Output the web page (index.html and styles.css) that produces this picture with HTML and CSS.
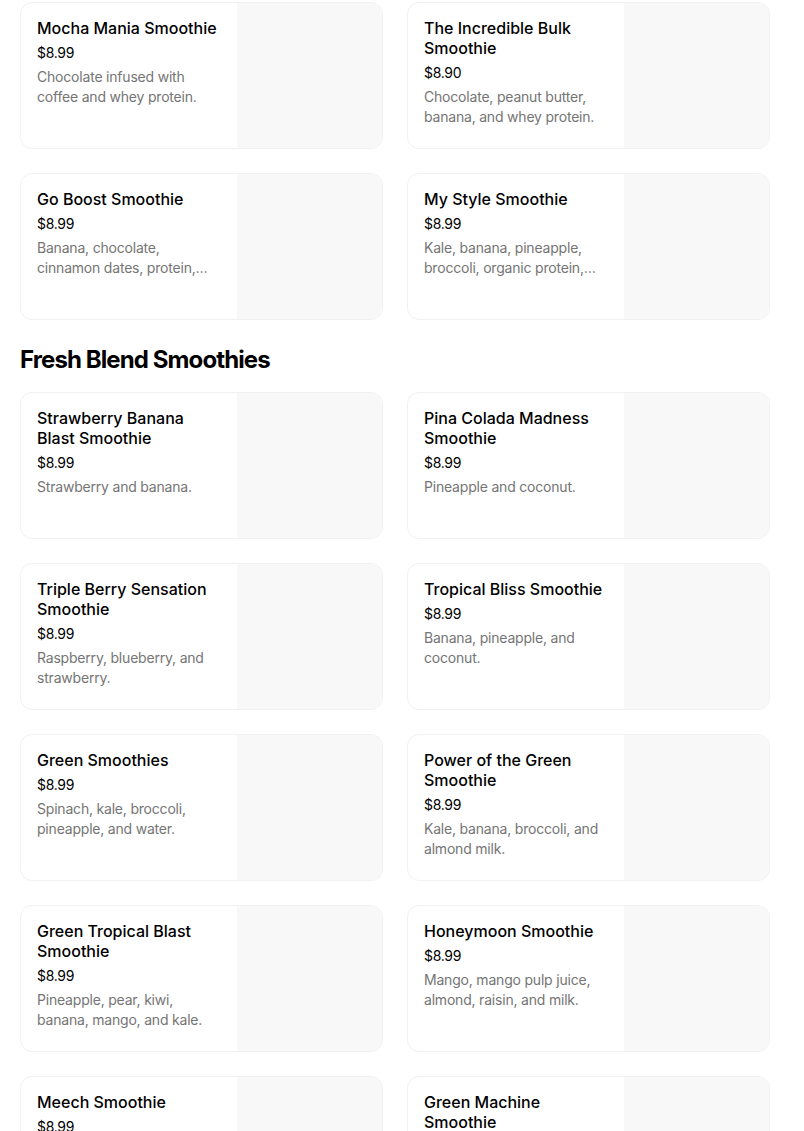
FILE: index.html
```html
<!DOCTYPE html>
<html lang="en">
<head>
<meta charset="utf-8">
<title>Menu</title>
<link rel="stylesheet" href="styles.css">
</head>
<body>
<main class="menu">
  <div class="grid">
    <div class="card"><div class="info"><div class="title">Mocha Mania Smoothie</div><div class="price">$8.99</div><div class="desc">Chocolate infused with coffee and whey protein.</div></div><div class="thumb"></div></div>
    <div class="card"><div class="info"><div class="title">The Incredible Bulk Smoothie</div><div class="price">$8.90</div><div class="desc">Chocolate, peanut butter, banana, and whey protein.</div></div><div class="thumb"></div></div>
    <div class="card"><div class="info"><div class="title">Go Boost Smoothie</div><div class="price">$8.99</div><div class="desc">Banana, chocolate, cinnamon dates, protein, and almond milk.</div></div><div class="thumb"></div></div>
    <div class="card"><div class="info"><div class="title">My Style Smoothie</div><div class="price">$8.99</div><div class="desc">Kale, banana, pineapple, broccoli, organic protein, and almond milk.</div></div><div class="thumb"></div></div>
  </div>
  <h2 class="section">Fresh Blend Smoothies</h2>
  <div class="grid">
    <div class="card"><div class="info"><div class="title">Strawberry Banana Blast Smoothie</div><div class="price">$8.99</div><div class="desc">Strawberry and banana.</div></div><div class="thumb"></div></div>
    <div class="card"><div class="info"><div class="title">Pina Colada Madness Smoothie</div><div class="price">$8.99</div><div class="desc">Pineapple and coconut.</div></div><div class="thumb"></div></div>
    <div class="card"><div class="info"><div class="title">Triple Berry Sensation Smoothie</div><div class="price">$8.99</div><div class="desc">Raspberry, blueberry, and strawberry.</div></div><div class="thumb"></div></div>
    <div class="card"><div class="info"><div class="title">Tropical Bliss Smoothie</div><div class="price">$8.99</div><div class="desc">Banana, pineapple, and coconut.</div></div><div class="thumb"></div></div>
    <div class="card"><div class="info"><div class="title">Green Smoothies</div><div class="price">$8.99</div><div class="desc">Spinach, kale, broccoli, pineapple, and water.</div></div><div class="thumb"></div></div>
    <div class="card"><div class="info"><div class="title">Power of the Green Smoothie</div><div class="price">$8.99</div><div class="desc">Kale, banana, broccoli, and almond milk.</div></div><div class="thumb"></div></div>
    <div class="card"><div class="info"><div class="title">Green Tropical Blast Smoothie</div><div class="price">$8.99</div><div class="desc">Pineapple, pear, kiwi, banana, mango, and kale.</div></div><div class="thumb"></div></div>
    <div class="card"><div class="info"><div class="title">Honeymoon Smoothie</div><div class="price">$8.99</div><div class="desc">Mango, mango pulp juice, almond, raisin, and milk.</div></div><div class="thumb"></div></div>
    <div class="card"><div class="info"><div class="title">Meech Smoothie</div><div class="price">$8.99</div><div class="desc">Banana, peanut butter, and almond milk.</div></div><div class="thumb"></div></div>
    <div class="card"><div class="info"><div class="title">Green Machine Smoothie</div><div class="price">$8.99</div><div class="desc">Spinach, kale, and apple.</div></div><div class="thumb"></div></div>
  </div>
</main>
</body>
</html>
```
FILE: styles.css
```css
* { box-sizing: border-box; }
html, body { margin: 0; padding: 0; background: #fff; }
body {
  font-family: Inter, "Liberation Sans", sans-serif;
  color: #000;
  overflow: hidden;
}
.menu {
  padding: 2px 34px 0 20px;
}
.grid {
  display: grid;
  grid-template-columns: 1fr 1fr;
  column-gap: 24px;
  row-gap: 24px;
}
.card {
  display: flex;
  height: 147px;
  border: 1px solid #f1f1f1;
  border-radius: 12px;
  overflow: hidden;
  background: #fff;
}
.info {
  flex: 1;
  min-width: 0;
  padding: 15px 16px 0 16px;
}
.thumb {
  width: 145px;
  flex: none;
  background: #f8f8f8;
}
.title {
  font-size: 16px;
  font-weight: 500;
  line-height: 20px;
  letter-spacing: 0;
}
.price {
  font-size: 14px;
  line-height: 20px;
  margin-top: 5px;
  letter-spacing: -0.3px;
}
.desc {
  font-size: 14px;
  line-height: 20px;
  color: #757575;
  margin-top: 4px;
  letter-spacing: -0.2px;
  display: -webkit-box;
  -webkit-line-clamp: 2;
  -webkit-box-orient: vertical;
  overflow: hidden;
}
.section {
  margin: 24px 0 16px 0;
  font-size: 24px;
  line-height: 32px;
  font-weight: 700;
  letter-spacing: -0.9px;
}
```
